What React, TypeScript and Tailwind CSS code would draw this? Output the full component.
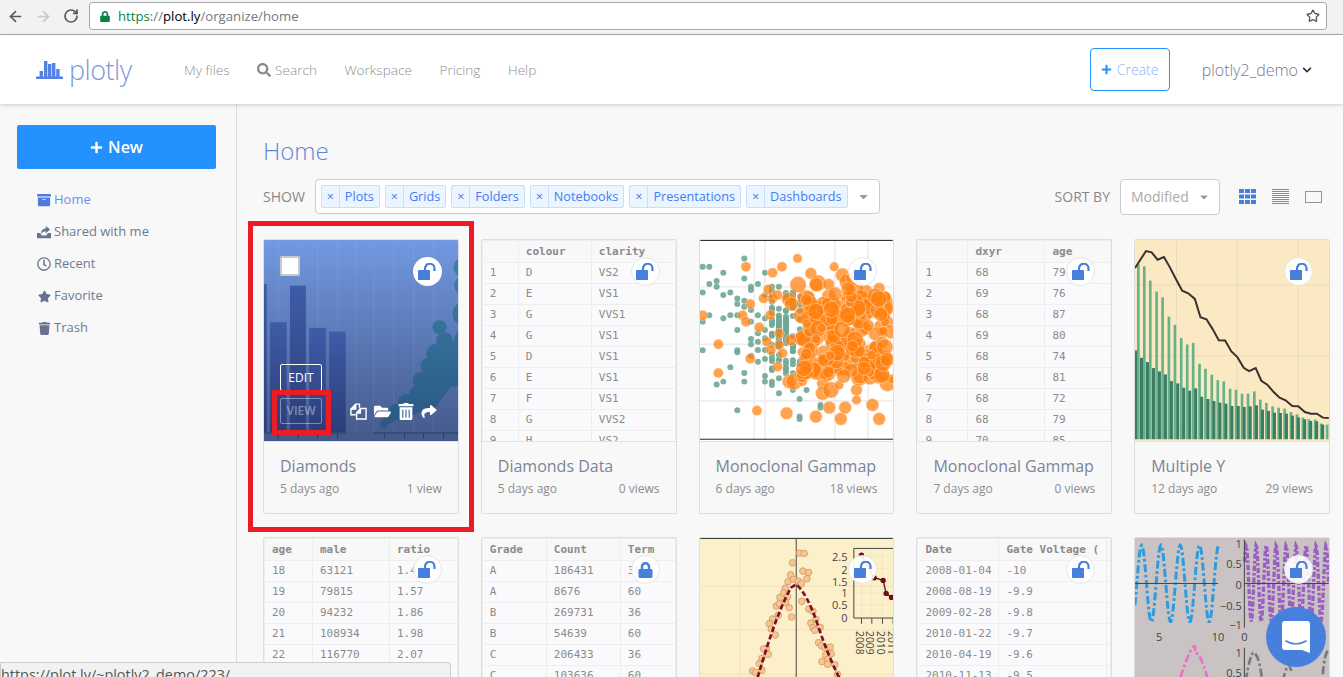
import { ArrowLeft, ArrowRight, RotateCw, Star } from "lucide-react";
import {
  FaArchive,
  FaCaretDown,
  FaChevronDown,
  FaFolderOpen,
  FaLock,
  FaPlus,
  FaRegClock,
  FaSearch,
  FaShare,
  FaStar,
  FaTrash,
  FaTrashAlt,
} from "react-icons/fa";

const navLinks = ["Workspace", "Pricing", "Help"];
const chips = ["Plots", "Grids", "Folders", "Notebooks", "Presentations", "Dashboards"];

// seeded so the scatter stays the same on every render
const rng = (seed: number) => () => {
  seed = (seed * 16807) % 2147483647;
  return seed / 2147483647;
};

const ShareBoxIcon = () => (
  <svg viewBox="0 0 16 14" className="w-[14px] h-[14px] fill-[#68738f]">
    <path d="M0 8h3.5l2 3h5l2-3H16v6H0z" />
    <path d="M4.5 9c0-3.5 2.5-6 5.5-6V0l5 4.2-5 4.2V6C8 6 6 7 4.5 9z" />
  </svg>
);

const UnlockIcon = () => (
  <svg viewBox="0 0 18 17" className="w-[18px] h-[17px]">
    <rect x="0" y="7" width="12" height="10" rx="0.8" fill="#4680dc" />
    <path d="M7 8V5.5a4.5 4.5 0 0 1 9.5 0V8" fill="none" stroke="#4680dc" strokeWidth="2.2" />
  </svg>
);

const CopyIcon = () => (
  <svg viewBox="0 0 18 18" className="w-[17px] h-[17px]" fill="none" stroke="#ffffff" strokeWidth="1.5">
    <path d="M6 12.5H1V6.5L6 1.2H10V5" />
    <path d="M1 6.5H6V1.2" fill="#ffffff" />
    <path d="M7 10.5 11 5.8H17V17H7Z" />
    <path d="M7 10.5H11V5.8" fill="#ffffff" />
  </svg>
);

const sideItems = [
  { icon: <FaArchive className="w-[14px] h-[14px]" />, label: "Home", active: true },
  { icon: <ShareBoxIcon />, label: "Shared with me" },
  { icon: <FaRegClock className="w-[14px] h-[14px]" />, label: "Recent" },
  { icon: <FaStar className="w-[13px] h-[13px]" />, label: "Favorite" },
  { icon: <FaTrash className="w-[13px] h-[13px]" />, label: "Trash" },
];

const LockBadge = ({ locked = false, plain = false }: { locked?: boolean; plain?: boolean }) => (
  <div
    className={`absolute top-[17px] right-[16px] w-[29px] h-[29px] rounded-full flex items-center justify-center text-[#4680dc] ${
      plain ? "bg-white" : "bg-white/90 border border-[#e6e6e6]"
    }`}
  >
    {locked ? <FaLock className="w-[15px] h-[16px]" /> : <UnlockIcon />}
  </div>
);

const DataTable = ({ cols, head, rows }: { cols: number[]; head: string[]; rows: string[][] }) => (
  <div className="h-[201px] overflow-hidden bg-[#fafafc]">
    <table className="table-fixed border-collapse w-full font-['DejaVu_Sans_Mono',monospace] text-[11px] text-[#8b8b8b]">
      <colgroup>
        {cols.map((w, i) => (
          <col key={i} style={{ width: w }} />
        ))}
      </colgroup>
      <thead>
        <tr className="h-[22px] bg-[#f8f8f8]">
          {head.map((h, i) => (
            <th key={i} className="border border-[#eeeeee] pl-[7px] pt-[1px] text-left font-bold whitespace-nowrap overflow-hidden">
              {h}
            </th>
          ))}
        </tr>
      </thead>
      <tbody>
        {rows.map((r, i) => (
          <tr key={i} className="h-[21px]">
            {r.map((c, j) => (
              <td key={j} className="border border-[#eeeeee] pl-[7px] whitespace-nowrap overflow-hidden">
                {c}
              </td>
            ))}
          </tr>
        ))}
      </tbody>
    </table>
  </div>
);

const DiamondsThumb = () => (
  <div className="relative h-[201px] overflow-hidden bg-linear-to-b from-[#7299e2] to-[#44598a]">
    <svg viewBox="42 30 583 600" className="absolute inset-0 w-full h-full">
      <defs>
        <linearGradient id="bar" x1="0" y1="0" x2="0" y2="1">
          <stop offset="0" stopColor="#3f5ca8" />
          <stop offset="1" stopColor="#2b3c78" />
        </linearGradient>
        <linearGradient id="blob" gradientUnits="userSpaceOnUse" x1="0" y1="100" x2="0" y2="600">
          <stop offset="0" stopColor="#3b80a6" />
          <stop offset="1" stopColor="#2a5784" />
        </linearGradient>
      </defs>
      {[85, 145, 203, 263, 320, 372, 432, 492, 552].map((x) => (
        <line key={x} x1={x} y1="30" x2={x} y2="605" stroke="#ffffff" strokeOpacity="0.07" strokeWidth="3" />
      ))}
      {[
        [30, 20, 160],
        [60, 50, 275],
        [120, 48, 165],
        [178, 50, 292],
        [238, 50, 303],
      ].map(([x, w, y]) => (
        <rect key={x} x={x} y={y} width={w} height={610 - y} fill="url(#bar)" />
      ))}
      <polygon points="625,330 570,345 530,400 490,480 470,500 410,570 400,590 440,570 560,530 625,440" fill="url(#blob)" />
      {[
        [570, 290, 21],
        [585, 330, 25],
        [642, 110, 30],
        [642, 165, 28],
        [645, 250, 36],
        [650, 330, 36],
        [560, 370, 30],
        [535, 405, 22],
        [515, 450, 26],
        [505, 490, 26],
        [600, 395, 38],
        [565, 435, 36],
        [610, 440, 30],
        [470, 515, 24],
        [540, 490, 26],
        [440, 540, 20],
        [415, 565, 16],
        [402, 582, 11],
        [500, 510, 22],
      ].map(([x, y, r], i) => (
        <circle key={i} cx={x} cy={y} r={r} fill="url(#blob)" />
      ))}
      <path d="M42 608H290M372 608H625" stroke="#34497c" strokeWidth="5" />
      {[85, 145, 203, 263, 405, 465, 522, 582].map((x) => (
        <line key={x} x1={x} y1="610" x2={x} y2="626" stroke="#2c3a64" strokeWidth="3" />
      ))}
    </svg>
    <div className="absolute left-[16px] top-[16px] w-[20px] h-[20px] bg-white border-2 border-[#c9c9c9] rounded-[2px]" />
    <div className="absolute left-[16px] top-[124px] flex flex-col gap-[7px] text-[12px]">
      <div className="w-[42px] h-[27px] border border-white rounded-[2px] flex items-center justify-center text-white">EDIT</div>
      <div className="w-[42px] h-[26px] border border-white/40 rounded-[2px] flex items-center justify-center font-semibold text-white/40">VIEW</div>
    </div>
    <div className="absolute left-[86px] top-[163px] flex items-center gap-[7px] text-white">
      <CopyIcon />
      <FaFolderOpen className="w-[17px] h-[17px]" />
      <FaTrashAlt className="w-[16px] h-[17px]" />
      <FaShare className="w-[16px] h-[15px]" />
    </div>
  </div>
);

const ScatterThumb = () => {
  const r = rng(4211);
  const teal = [
    [35, 95], [55, 95], [97, 113], [160, 70], [160, 130], [77, 138], [55, 147], [77, 155], [35, 172], [97, 180],
    [118, 172], [139, 190], [139, 207], [160, 197], [160, 215], [180, 155], [180, 165], [201, 147], [222, 113],
    [243, 155], [264, 155], [118, 241], [139, 241], [97, 250], [55, 241], [35, 260], [139, 285], [180, 225],
    [180, 260], [201, 241], [222, 180], [222, 250], [35, 346], [139, 346], [139, 352], [118, 397], [97, 440],
    [77, 449], [160, 414], [160, 440], [222, 423], [222, 440], [243, 440], [243, 450], [264, 475], [306, 465],
    [347, 465], [326, 492], [139, 526], [326, 545], [326, 552], [389, 510], [389, 518], [180, 312], [180, 328],
    [201, 295], [201, 320], [201, 345], [222, 285], [222, 310], [222, 345], [222, 372], [201, 380], [180, 362],
    [243, 405], [264, 430], [285, 405], [285, 415], [306, 415], [326, 415], [306, 388], [326, 388], [347, 372],
  ];
  // the x values sit on yearly columns, so snap the dense part to them
  for (let i = 0; i < 70; i++) teal.push([243 + Math.floor(r() * 5) * 21, 165 + r() * 235]);
  for (let i = 0; i < 30; i++) teal.push([264 + Math.floor(r() * 2) * 21, 240 + r() * 90]);
  const orange = [
    [320, 70], [165, 95], [245, 113], [273, 95], [430, 95], [35, 241], [155, 241], [165, 260], [205, 277], [82, 328],
    [178, 371], [82, 414], [198, 527], [287, 535], [375, 545], [450, 552], [463, 518], [545, 510], [565, 552],
    [415, 518], [497, 495], [497, 465], [178, 207], [218, 190], [232, 163], [360, 115], [455, 120], [470, 140],
    [592, 198], [590, 260], [600, 290], [590, 445], [605, 432], [265, 295], [265, 330], [275, 355], [238, 240],
    [228, 320], [240, 345], [260, 395], [245, 190], [260, 180], [295, 440], [310, 440], [335, 440], [395, 445],
    [395, 475], [420, 465], [445, 450], [565, 160], [525, 170], [495, 160],
  ];
  for (let i = 0; i < 175; i++) orange.push([330 + r() * 255, 180 + r() * 250]);
  for (let i = 0; i < 45; i++) orange.push([285 + r() * 320, 130 + r() * 310]);
  return (
    <div className="h-[201px] bg-white">
      <svg viewBox="27 15 582 603" className="w-full h-full">
        {[190, 222, 432, 532].map((x) => (
          <line key={x} x1={x} y1="15" x2={x} y2="612" stroke="#eeeeee" strokeWidth="5" />
        ))}
        {[155, 328, 498].map((y) => (
          <line key={y} x1="27" y1={y} x2="609" y2={y} stroke="#eeeeee" strokeWidth="5" />
        ))}
        {teal.map(([x, y], i) => (
          <circle key={i} cx={x} cy={y} r="9" fill="#6fa795" fillOpacity="0.9" />
        ))}
        {orange.map(([x, y], i) => (
          <circle
            key={i}
            cx={x}
            cy={y}
            r={x < 280 ? 15 : y > 500 ? 19 : 14 + (i % 4) * 3.5}
            fill="#ff7f0e"
            fillOpacity="0.72"
            stroke="#ffe3c4"
            strokeOpacity="0.75"
            strokeWidth="2"
          />
        ))}
        <path d="M27 16H609M27 613H609" stroke="#222222" strokeWidth="3" />
      </svg>
    </div>
  );
};

const lightBars = [
  [55, 85], [73, 92], [91, 135], [110, 168], [128, 185], [147, 243], [165, 268], [184, 308], [202, 327], [220, 322],
  [239, 385], [257, 400], [276, 418], [294, 434], [312, 438], [331, 460], [349, 463], [367, 475], [385, 475], [404, 468],
  [422, 493], [440, 503], [459, 513], [477, 517], [495, 520], [514, 530], [532, 537], [550, 547], [568, 552], [587, 553],
  [605, 565], [623, 568],
];
const darkBars = [
  [46, 345], [64, 367], [82, 380], [100, 398], [118, 408], [136, 417], [154, 437], [173, 444], [191, 457], [209, 466],
  [227, 459], [245, 484], [264, 491], [282, 497], [300, 502], [318, 505], [336, 512], [355, 512], [373, 515], [391, 513],
  [410, 510], [428, 523], [446, 527], [464, 532], [482, 533], [500, 535], [518, 541], [536, 546], [555, 552], [573, 557],
  [591, 558], [609, 568],
];

const MultipleYThumb = () => (
  <div className="h-[201px] bg-[#fbe9c4]">
    <svg viewBox="45 15 583 600" className="w-full h-full">
      {[170, 352, 536].map((x) => (
        <line key={x} x1={x} y1="15" x2={x} y2="612" stroke="#e9dcbc" strokeWidth="3" />
      ))}
      {[148, 361, 574].map((y) => (
        <line key={y} x1="45" y1={y} x2="628" y2={y} stroke="#e9dcbc" strokeWidth="3" />
      ))}
      {lightBars.map(([x, y]) => (
        <rect key={x} x={x - 4} y={y} width="8" height={612 - y} fill="#66b28a" />
      ))}
      {darkBars.map(([x, y]) => (
        <rect key={x} x={x - 4} y={y} width="9" height={612 - y} fill="#3d7b62" />
      ))}
      <polyline
        fill="none"
        stroke="#3a3030"
        strokeWidth="6"
        points="45,97 78,46 95,50 113,72 132,64 150,95 168,130 187,165 205,173 225,190 242,245 260,251 278,280 297,314 316,315 335,348 353,365 372,397 388,407 408,398 425,436 443,448 462,470 480,487 498,495 518,512 536,513 556,530 574,535 592,535 610,547 628,548"
      />
    </svg>
  </div>
);

const GammapThumb = () => {
  const pts = [
    [326, 66], [340, 67], [305, 95], [336, 120], [353, 124], [348, 143], [299, 131], [291, 152], [308, 145], [322, 150],
    [331, 158], [283, 172], [278, 186], [267, 199], [290, 197], [284, 214], [256, 225], [265, 218], [295, 230], [333, 211],
    [354, 234], [366, 241], [302, 258], [262, 253], [245, 264], [235, 278], [241, 294], [253, 312], [360, 276], [375, 265],
    [388, 289], [366, 290], [372, 298], [383, 335], [392, 344], [402, 350], [418, 348], [421, 368], [404, 372], [411, 385],
    [393, 392], [410, 400], [432, 401], [226, 352], [218, 354], [232, 370], [213, 382], [205, 398], [213, 418], [185, 420],
    [194, 425], [440, 430],
  ];
  return (
    <div className="h-[201px] overflow-hidden bg-[#fcf0cb]">
      <svg viewBox="27 21 582 603" className="w-full h-full">
        <line x1="146" y1="21" x2="146" y2="624" stroke="#f1e3bd" strokeWidth="3" />
        {[165, 297, 430, 560].map((y) => (
          <line key={y} x1="27" y1={y} x2="609" y2={y} stroke="#f1e3bd" strokeWidth="3" />
        ))}
        <line x1="316" y1="21" x2="316" y2="624" stroke="#444444" strokeWidth="3" />
        {pts.map(([x, y], i) => (
          <circle key={i} cx={x} cy={y} r="10" fill="#f7c58e" stroke="#c98b60" strokeWidth="2" />
        ))}
        <path
          d="M200 440Q255 250 300 170L316 160Q350 190 380 280T445 440"
          fill="none"
          stroke="#7a1022"
          strokeWidth="8"
          strokeDasharray="16 8"
        />
        <path d="M27 22H609" stroke="#333333" strokeWidth="3" />
        {[512, 543, 575, 607].map((x) => (
          <line key={x} x1={x} y1="52" x2={x} y2="258" stroke="#f1e3bd" strokeWidth="2" />
        ))}
        {[75, 112, 148, 185, 222].map((y) => (
          <line key={y} x1="490" y1={y} x2="609" y2={y} stroke="#f1e3bd" strokeWidth="2" />
        ))}
        <path d="M609 52H489V261H609" fill="none" stroke="#444444" strokeWidth="3" />
        <path d="M512 262V278M543 262V278M575 262V278M607 262V278" stroke="#444444" strokeWidth="3" />
        <polyline points="512,72 550,140 577,148 586,187 602,199 620,205" fill="none" stroke="#6e0f1e" strokeWidth="4" />
        {[[512, 72], [550, 140], [577, 148], [586, 187], [602, 199]].map(([x, y]) => (
          <circle key={x} cx={x} cy={y} r="8" fill="#6e0f1e" />
        ))}
        {[["2.5", 90], ["2", 128], ["1.5", 164], ["1", 197], ["0.5", 234], ["0", 272]].map(([t, y]) => (
          <text key={t} x="470" y={y} textAnchor="end" fontSize="33" fill="#444444" fontFamily="Open Sans, sans-serif">
            {t}
          </text>
        ))}
        {[["2008", 495], ["2009", 527], ["2010", 559], ["2011", 591]].map(([t, x]) => (
          <text key={t} x={x} y="300" fontSize="31" fill="#444444" fontFamily="Open Sans, sans-serif" transform={`rotate(90 ${x} 300)`}>
            {t}
          </text>
        ))}
      </svg>
    </div>
  );
};

const sineWave = (x0: number, x1: number, mid: number, amp: number, period: number, phase = 0) => {
  const out: string[] = [];
  for (let x = x0; x <= x1; x += 2) {
    out.push(`${x},${(mid - amp * Math.sin(((x - x0) / period) * Math.PI * 2 + phase)).toFixed(1)}`);
  }
  return out.join(" ");
};

const SubplotsThumb = () => (
  <div className="h-[201px] overflow-hidden bg-[#c9c3c3]">
    <svg viewBox="45 21 583 603" className="w-full h-full">
      <polyline points={sineWave(45, 295, 157, 115, 58, -0.6)} fill="none" stroke="#2d9be0" strokeWidth="9" strokeDasharray="24 8 8 8" />
      <polyline points={sineWave(375, 628, 157, 115, 30, 0.6)} fill="none" stroke="#9b5fc4" strokeWidth="10" strokeDasharray="16 6 8 6" />
      <path d="M45 157H295M375 157H628M374 25V290M374 350V624" stroke="#444444" strokeWidth="3" fill="none" />
      {[["1", 50], ["0.5", 111], ["0", 174], ["\u22120.5", 236], ["\u22121", 294], ["1", 378], ["0.5", 439]].map(([t, y], i) => (
        <text key={i} x="366" y={y} textAnchor="end" fontSize="33" fill="#444444" fontFamily="Open Sans, sans-serif">
          {t}
        </text>
      ))}
      {[["5", 118], ["10", 295], ["0", 374]].map(([t, x]) => (
        <text key={x} x={x} y="331" textAnchor="middle" fontSize="33" fill="#444444" fontFamily="Open Sans, sans-serif">
          {t}
        </text>
      ))}
      <path d="M130 624Q180 430 205 375T225 365Q245 370 262 440T310 624" fill="none" stroke="#ee6fc3" strokeWidth="8" strokeDasharray="24 8 8 8" />
      <path d="M378 450Q392 365 402 365Q420 370 430 470M490 450Q505 380 515 420M610 430Q615 370 625 360" fill="none" stroke="#7a7a7a" strokeWidth="8" strokeDasharray="24 8 8 8" />
    </svg>
  </div>
);

const Card = ({
  children,
  title,
  age,
  views,
  plainBadge,
  locked,
}: {
  children: React.ReactNode;
  title: string;
  age: string;
  views: string;
  plainBadge?: boolean;
  locked?: boolean;
}) => (
  <div className="relative h-[275px] border border-[#dedede] rounded-[2px] bg-[#f8f8f8] overflow-hidden">
    {children}
    <LockBadge locked={locked} plain={plainBadge} />
    <div className="border-t border-[#e2e2e2] px-[16px] pt-[12px]">
      <div className="text-[16px] leading-[24px] text-[#7c8498] whitespace-nowrap">{title}</div>
      <div className="flex justify-between mt-[2px] text-[12px] leading-[18px] text-[#8d8d8d]">
        <span>{age}</span>
        <span>{views}</span>
      </div>
    </div>
  </div>
);

export default function App() {
  return (
    <div className="relative w-[1343px] h-[677px] overflow-hidden bg-[#f8f8f8] font-['Open_Sans',sans-serif]">
      {/* Browser chrome */}
      <div className="h-[35px] bg-[#f2f2f2] border-b border-[#a9a9a9] flex items-center pl-[7px] pr-[16px] pb-[4px] pt-[2px]">
        <ArrowLeft className="w-[17px] h-[17px] text-[#5a5a5a]" strokeWidth={2.4} />
        <ArrowRight className="ml-[11px] w-[17px] h-[17px] text-[#c8c8c8]" strokeWidth={2.4} />
        <RotateCw className="ml-[11px] w-[16px] h-[16px] text-[#5a5a5a]" strokeWidth={2.6} />
        <div className="ml-[10px] flex-1 h-[28px] bg-white border border-[#a9a9a9] rounded-[3px] flex items-center pl-[10px] pr-[6px]">
          <FaLock className="w-[10px] h-[11px] text-[#0b8043]" />
          <span className="ml-[8px] mt-[1px] text-[13.2px] text-[#777777] whitespace-nowrap">
            <span className="text-[#0b8043]">https</span>://<span className="text-black">plot.ly</span>/organize/home
          </span>
          <Star className="ml-auto w-[14px] h-[14px] text-[#555555]" strokeWidth={2.2} />
        </div>
      </div>

      {/* Top nav */}
      <div className="relative z-10 h-[69px] bg-white shadow-[0_1px_4px_rgba(0,0,0,0.18)] flex items-center pl-[36px] pr-[31px] font-light">
        <svg viewBox="0 0 27 20" className="w-[27px] h-[20px] mt-[1px] fill-[#5580e4]">
          <rect x="0" y="16.5" width="27" height="2.5" />
          <rect x="3.6" y="11" width="3.4" height="8" />
          <rect x="8" y="1" width="3.4" height="18" />
          <rect x="12" y="4" width="3.4" height="15" />
          <rect x="16" y="3" width="3.4" height="16" />
          <rect x="20.2" y="9" width="3.4" height="10" />
        </svg>
        <span className="ml-[6px] w-[62px] text-[27px] leading-[36px] tracking-[-0.5px] text-[#7f97dc]">plotly</span>
        <div className="ml-[53px] mt-[1px] flex items-center gap-[27.5px] text-[13.6px] text-[#8f8f8f]">
          <span>My files</span>
          <span className="flex items-center gap-[4px]">
            <FaSearch className="w-[14px] h-[14px] text-[#8a8a8a]" />
            Search
          </span>
          {navLinks.map((l) => (
            <span key={l}>{l}</span>
          ))}
        </div>
        <div className="ml-auto -mt-[1px] w-[80px] h-[43px] border border-[#2391fe] rounded-[4px] flex items-center justify-center gap-[5px] text-[14px] text-[#8fb0f5]">
          <FaPlus className="w-[11px] h-[11px] text-[#2391fe]" />
          Create
        </div>
        <div className="ml-[32px] flex items-center gap-[4px] text-[16px] text-[#707b92]">
          plotly2_demo
          <FaChevronDown className="w-[10px] h-[10px] text-[#333333]" />
        </div>
      </div>

      <div className="flex">
        {/* Sidebar */}
        <div className="w-[237px] h-[573px] border-r border-[#dddddd] pl-[17px] pt-[21px]">
          <div className="w-[199px] h-[44px] bg-[#2391fe] rounded-[2px] flex items-center justify-center gap-[5px] text-white text-[16px] font-semibold">
            <FaPlus className="w-[13px] h-[13px]" />
            New
          </div>
          <div className="mt-[21px] pl-[20px] flex flex-col gap-[12px]">
            {sideItems.map((s) => (
              <div
                key={s.label}
                className={`h-[20px] flex items-center gap-[3px] text-[13px] ${s.active ? "text-[#6a8fee]" : "text-[#6f7a92]"}`}
              >
                <span className={`w-[14px] flex justify-center ${s.active ? "text-[#4f7ae0]" : "text-[#68738f]"}`}>{s.icon}</span>
                {s.label}
              </div>
            ))}
          </div>
        </div>

        {/* Main */}
        <div className="flex-1 pl-[26px] pr-[13px] pt-[30px]">
          <h1 className="text-[24px] leading-[33px] font-light text-[#5d86d8]">Home</h1>
          <div className="mt-[12px] h-[35px] flex items-center">
            <span className="text-[14px] text-[#888888]">SHOW</span>
            <div className="ml-[10px] w-[565px] h-[35px] bg-white border border-[#cccccc] rounded-[4px] flex items-center pl-[5px] gap-[5px]">
              {chips.map((c) => (
                <div key={c} className="h-[23px] flex items-center bg-[#ebf5ff] border border-[#c2e0ff] rounded-[2px] text-[12.7px] text-[#3f7df2]">
                  <span className="w-[18px] h-full flex items-center justify-center border-r border-[#c2e0ff]">×</span>
                  <span className="px-[5px] whitespace-nowrap">{c}</span>
                </div>
              ))}
              <FaCaretDown className="ml-auto mr-[9px] w-[13px] h-[13px] text-[#999999]" />
            </div>
            <span className="ml-auto text-[14px] text-[#888888]">SORT BY</span>
            <div className="ml-[10px] w-[100px] h-[36px] bg-white border border-[#cccccc] rounded-[4px] flex items-center pl-[10px] text-[14px] text-[#aaaaaa]">
              Modified
              <FaCaretDown className="ml-auto mr-[9px] w-[12px] h-[12px] text-[#999999]" />
            </div>
            <div className="ml-[19px] mr-[8px] flex items-center gap-[16px]">
              <svg viewBox="0 0 17 15" className="w-[17px] h-[15px] fill-[#4680dc]">
                {[0, 6, 12].flatMap((x) =>
                  [0, 5.5, 11].map((y) => <rect key={`${x}-${y}`} x={x} y={y} width="5" height="4" />),
                )}
              </svg>
              <svg viewBox="0 0 17 15" className="w-[17px] h-[15px] fill-[#8a8a8a]">
                {[0, 2, 4, 6, 8, 10, 12, 14].map((y) => (
                  <rect key={y} x="0" y={y} width="17" height="1" />
                ))}
              </svg>
              <div className="w-[17px] h-[12px] border-[1.5px] border-[#8f959f]" />
            </div>
          </div>

          <div className="mt-[25px] grid grid-cols-5 gap-x-[22px] gap-y-[23px]">
            <Card title="Diamonds" age="5 days ago" views="1 view" plainBadge>
              <DiamondsThumb />
            </Card>
            <Card title="Diamonds Data" age="5 days ago" views="0 views">
              <DataTable
                cols={[36, 73, 84]}
                head={["", "colour", "clarity"]}
                rows={[
                  ["1", "D", "VS2"],
                  ["2", "E", "VS1"],
                  ["3", "G", "VVS1"],
                  ["4", "G", "VS1"],
                  ["5", "D", "VS1"],
                  ["6", "E", "VS1"],
                  ["7", "F", "VS1"],
                  ["8", "G", "VVS2"],
                  ["9", "H", "VS2"],
                ]}
              />
            </Card>
            <Card title="Monoclonal Gammap" age="6 days ago" views="18 views">
              <ScatterThumb />
            </Card>
            <Card title="Monoclonal Gammap" age="7 days ago" views="0 views">
              <DataTable
                cols={[50, 77, 66]}
                head={["", "dxyr", "age"]}
                rows={[
                  ["1", "68", "79"],
                  ["2", "69", "76"],
                  ["3", "68", "87"],
                  ["4", "69", "80"],
                  ["5", "68", "74"],
                  ["6", "68", "81"],
                  ["7", "68", "72"],
                  ["8", "68", "79"],
                  ["9", "70", "85"],
                ]}
              />
            </Card>
            <Card title="Multiple Y" age="12 days ago" views="29 views">
              <MultipleYThumb />
            </Card>
            <Card title="Age" age="14 days ago" views="3 views">
              <DataTable
                cols={[48, 77, 68]}
                head={["age", "male", "ratio"]}
                rows={[
                  ["18", "63121", "1.47"],
                  ["19", "79815", "1.57"],
                  ["20", "94232", "1.86"],
                  ["21", "108934", "1.98"],
                  ["22", "116770", "2.07"],
                  ["23", "118762", "2.14"],
                ]}
              />
            </Card>
            <Card title="Grades" age="14 days ago" views="2 views" locked>
              <DataTable
                cols={[64, 74, 55]}
                head={["Grade", "Count", "Term"]}
                rows={[
                  ["A", "186431", "36"],
                  ["A", "8676", "60"],
                  ["B", "269731", "36"],
                  ["B", "54639", "60"],
                  ["C", "206433", "36"],
                  ["C", "103636", "60"],
                ]}
              />
            </Card>
            <Card title="Gate Voltage" age="15 days ago" views="4 views">
              <GammapThumb />
            </Card>
            <Card title="Gate Voltage Data" age="15 days ago" views="0 views">
              <DataTable
                cols={[81, 108, 4]}
                head={["Date", "Gate Voltage (", ""]}
                rows={[
                  ["2008-01-04", "-10", ""],
                  ["2008-08-19", "-9.9", ""],
                  ["2009-02-28", "-9.8", ""],
                  ["2010-01-22", "-9.7", ""],
                  ["2010-04-19", "-9.6", ""],
                  ["2010-11-13", "-9.5", ""],
                ]}
              />
            </Card>
            <Card title="Subplots" age="16 days ago" views="1 view">
              <SubplotsThumb />
            </Card>
          </div>
        </div>
      </div>

      {/* Red annotation boxes drawn over the screenshot */}
      <div className="absolute left-[248px] top-[221px] w-[226px] h-[311px] border-[5px] border-[#ed1c24] z-20" />
      <div className="absolute left-[272px] top-[390px] w-[59px] h-[45px] border-[5px] border-[#ed1c24] z-20" />

      {/* Link status bubble */}
      <div className="absolute left-0 top-[662px] w-[451px] h-[20px] bg-[#f2f2f2] border border-[#cccccc] rounded-tr-[3px] z-30 text-[14.4px] leading-[24px] text-[#555555] whitespace-nowrap overflow-hidden">
        https://plot.ly/~plotly2_demo/223/
      </div>

      {/* Chat launcher */}
      <div className="absolute left-[1266px] top-[607px] w-[60px] h-[60px] rounded-full bg-[#4680dc] flex items-center justify-center z-30">
        <svg viewBox="0 0 28 32" className="w-[28px] h-[32px]">
          <path d="M3 0H25Q28 0 28 3V32L20 29H3Q0 29 0 26V3Q0 0 3 0Z" fill="#ffffff" />
          <path d="M4 20Q14 26 24 20" fill="none" stroke="#4680dc" strokeWidth="1.6" strokeLinecap="round" />
        </svg>
      </div>
    </div>
  );
}
